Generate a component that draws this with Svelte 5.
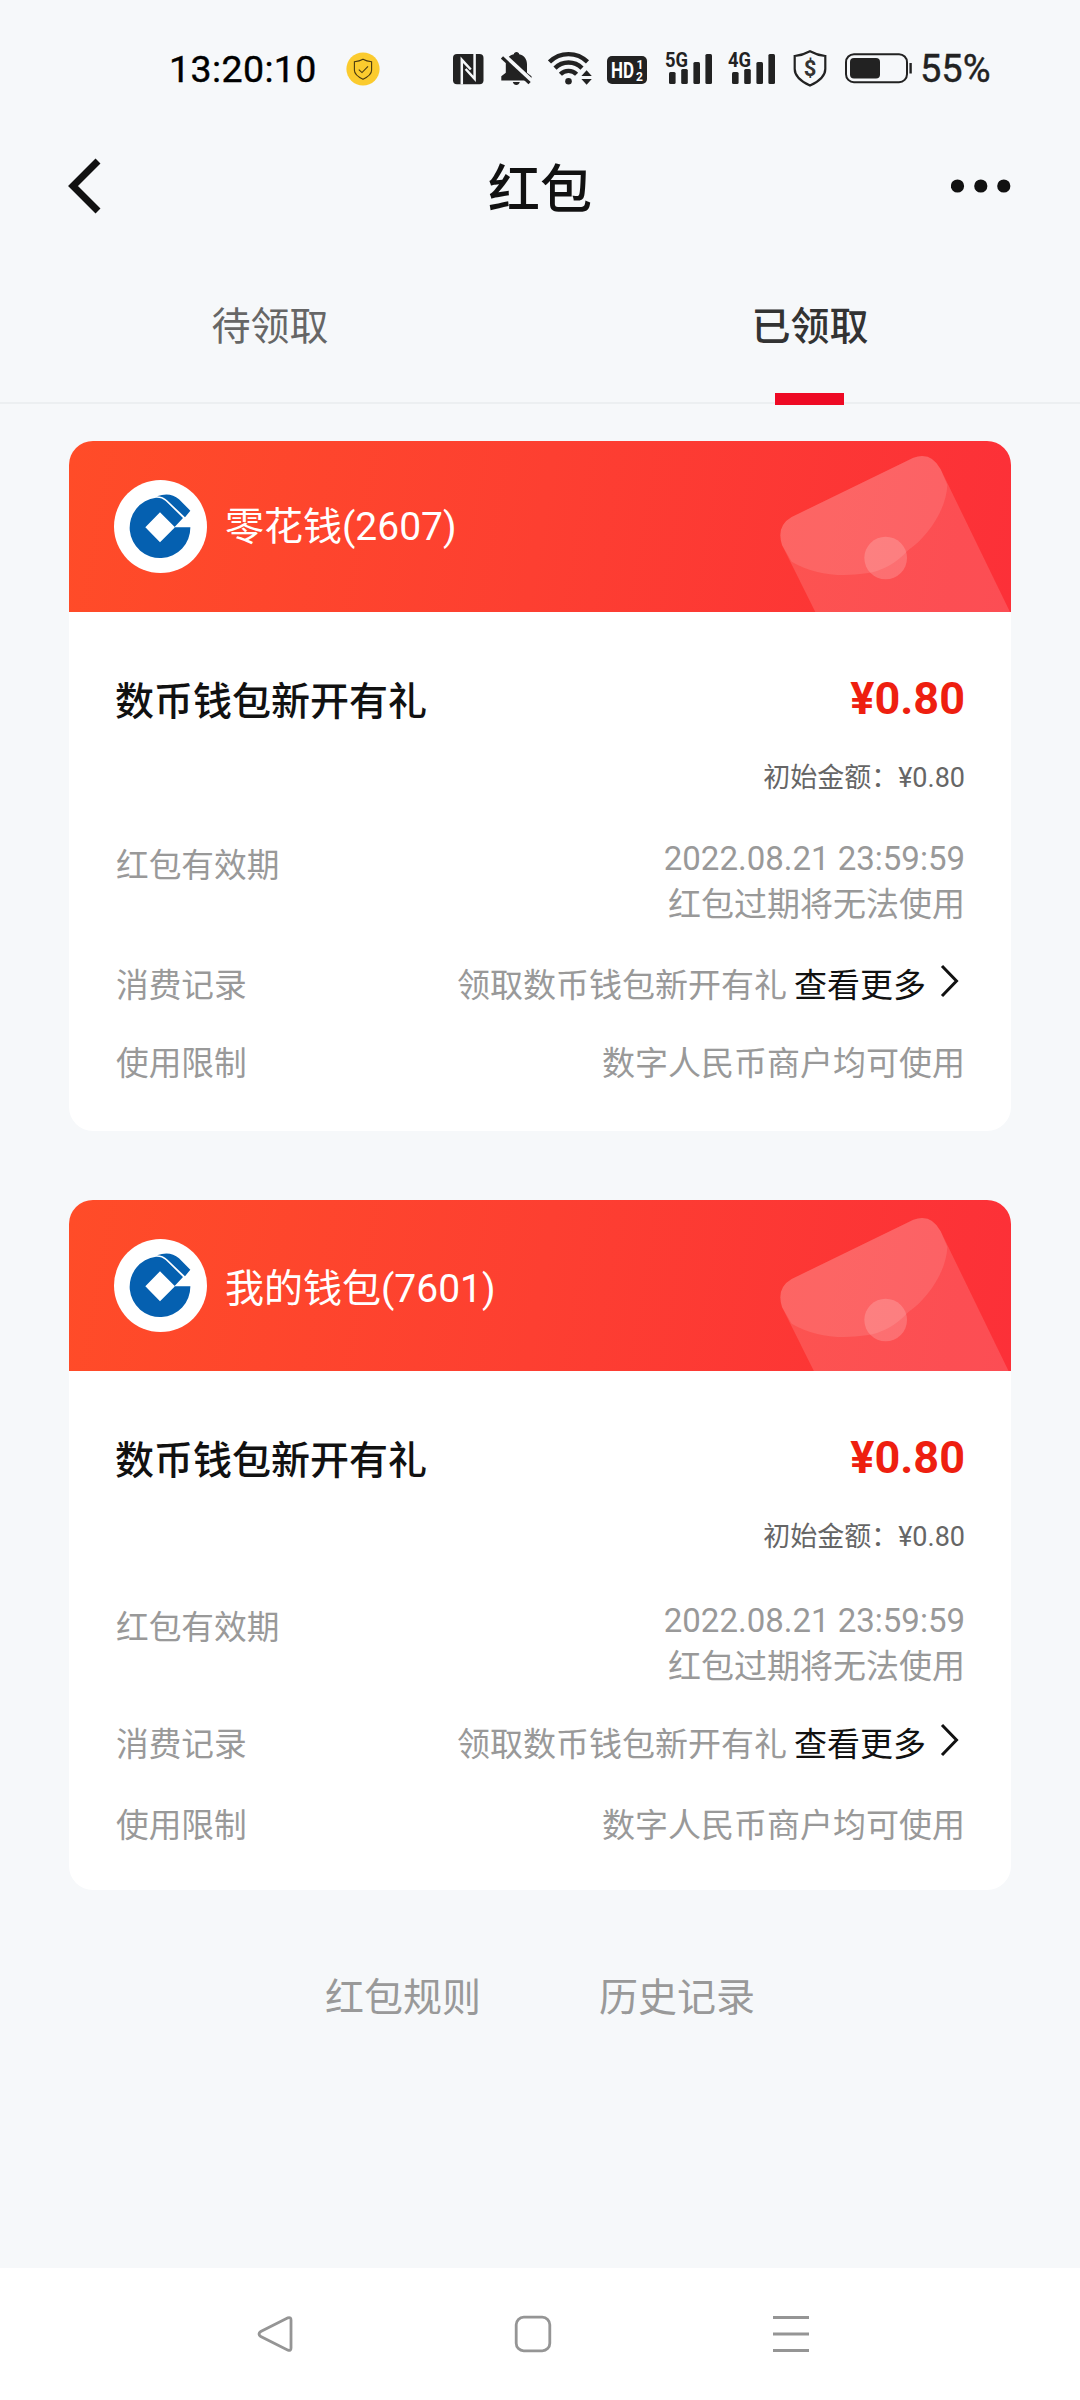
<script lang="ts">
  type Packet = {
    wallet: string;
    tail: string;
    title: string;
    amount: string;
    expires: string;
    record: string;
    limit: string;
  };

  const tabs = ["待领取", "已领取"];
  let active = $state(1);

  const packets: Packet[] = [
    {
      wallet: "零花钱",
      tail: "2607",
      title: "数币钱包新开有礼",
      amount: "¥0.80",
      expires: "2022.08.21 23:59:59",
      record: "领取数币钱包新开有礼",
      limit: "数字人民币商户均可使用",
    },
    {
      wallet: "我的钱包",
      tail: "7601",
      title: "数币钱包新开有礼",
      amount: "¥0.80",
      expires: "2022.08.21 23:59:59",
      record: "领取数币钱包新开有礼",
      limit: "数字人民币商户均可使用",
    },
  ];
</script>

{#snippet signal(label: string)}
  <svg class="signal" width="48" height="40" viewBox="0 0 48 40">
    <text x="0" y="18" textLength="23" lengthAdjust="spacingAndGlyphs">{label}</text>
    <rect x="4" y="23" width="6.6" height="12" rx="1.5" />
    <rect x="16.2" y="20" width="6.6" height="15" rx="1.5" />
    <rect x="28.4" y="13" width="6.6" height="22" rx="1.5" />
    <rect x="40.4" y="5" width="6.6" height="30" rx="1.5" />
  </svg>
{/snippet}

<div class="screen">
  <div class="status">
    <span class="time">13:20:10</span>
    <svg class="guard" width="34" height="34" viewBox="0 0 34 34">
      <circle cx="17" cy="17" r="16.6" fill="#fbcb2e" />
      <path
        d="M17 7.2c2.600 1.500 5.400 2.200 8.600 2.500v8.600c0 4-3.400 6.500-8.600 9-5.200-2.500-8.600-5-8.600-9V9.700c3.200-.3 6-1 8.600-2.500z"
        fill="none"
        stroke="#4a3a10"
        stroke-width="1.100"
      />
      <path d="M12.800 17.600l3.200 3 6-6.200" fill="none" stroke="#4a3a10" stroke-width="1.100" />
    </svg>

    <svg class="nfc" width="31" height="40" viewBox="0 0 31 40">
      <rect x="0" y="5" width="30.500" height="30.200" rx="4" fill="#222" />
      <path
        d="M8.800 35.500V10.800L17.800 20.500M21.600 4.500v25.300L12.600 20"
        fill="none"
        stroke="#f6f8fa"
        stroke-width="2.500"
      />
    </svg>

    <svg class="bell" width="31" height="40" viewBox="0 0 31 40">
      <path
        d="M15.500 3c1.500 0 2.500 1 2.700 2.200 5 1.200 7.800 5 7.800 10v8.500l4.500 3.600v4.300H.3v-4.300l4.500-3.600v-8.500c0-5 2.800-8.800 8-10 .2-1.200 1.200-2.200 2.700-2.200zM11.800 33h7c-.6 2-1.800 3-3.500 3s-2.900-1-3.500-3z"
        fill="#222"
      />
      <path d="M2 5.900l29 26.800" stroke="#f6f8fa" stroke-width="5.200" />
      <path d="M1 8.500l27.600 25.600" stroke="#222" stroke-width="3.200" />
    </svg>

    <svg class="wifi" width="44" height="40" viewBox="0 0 44 40">
      <g fill="none" stroke="#222" stroke-width="4.400">
        <path d="M1.500 12.900a27 27 0 0 1 38 0" />
        <path d="M7 19.100a19 19 0 0 1 27 0" />
        <path d="M12.400 25.200a11.500 11.500 0 0 1 16.200 0" />
      </g>
      <circle cx="20.500" cy="32.300" r="3.300" fill="#222" />
      <path d="M38.600 21.300l5.200 5.600h-10.400zM38.600 35.700l5.200-5.600h-10.400z" fill="#222" />
    </svg>

    <svg class="hd" width="40" height="40" viewBox="0 0 40 40">
      <rect x="0" y="7" width="40" height="28" rx="5" fill="#222" />
      <text class="hd-main" x="4" y="29" textLength="23" lengthAdjust="spacingAndGlyphs">HD</text>
      <text class="hd-sub" x="29.500" y="20">1</text>
      <text class="hd-sub" x="29" y="32">2</text>
    </svg>

    {@render signal("5G")}
    {@render signal("4G")}

    <svg class="shield" width="34" height="40" viewBox="0 0 34 40">
      <path
        d="M17 2.200c4.500 2.500 9.500 4.200 15.300 4.800V20c0 7.500-6 12.300-15.300 16.600C7.700 32.300 1.700 27.500 1.700 20V7C7.500 6.400 12.500 4.700 17 2.200z"
        fill="none"
        stroke="#222"
        stroke-width="2.200"
      />
      <text x="17" y="27" text-anchor="middle">$</text>
    </svg>

    <svg class="battery" width="67" height="40" viewBox="0 0 67 40">
      <rect x="1" y="5.200" width="61" height="28" rx="8" fill="none" stroke="#222" stroke-width="2" />
      <rect x="5" y="9" width="30" height="20.500" rx="4" fill="#222" />
      <path d="M65.600 14v10.500" stroke="#222" stroke-width="2.400" />
    </svg>
    <span class="percent">55%</span>
  </div>

  <header>
    <svg width="34" height="56" viewBox="0 0 34 56">
      <path d="M31 3L6 28l25 25" fill="none" stroke="#111" stroke-width="7" />
    </svg>
    <h1>红包</h1>
    <svg width="60" height="20" viewBox="0 0 60 20" fill="#111">
      <circle cx="6.500" cy="10" r="6.600" />
      <circle cx="29.800" cy="10" r="6.600" />
      <circle cx="52.800" cy="10" r="6.600" />
    </svg>
  </header>

  <nav class="tabs">
    {#each tabs as tab, i}
      <button class:active={i === active} onclick={() => (active = i)}>{tab}</button>
    {/each}
  </nav>

  <main>
    {#each packets as packet}
      <section class="card">
        <div class="top">
          <svg class="logo" width="93" height="93" viewBox="162 150 279 279">
            <circle cx="301.500" cy="289.500" r="139.500" fill="#fff" />
            <g fill="#0560b0">
              <path
                d="M391 292A91 91 0 1 1 288 203Q305 202 317 213L369 264L343 291.500H391ZM300 247L256 292L300 337L345 292Z"
                fill-rule="evenodd"
              />
              <path d="M291 199Q330 184 357 208L391 242L375 262L323 212Q309 199 291 199Z" />
            </g>
          </svg>
          <span class="wallet">{packet.wallet}({packet.tail})</span>
          <svg class="envelope" width="271" height="171" viewBox="0 33 813 513">
            <path
              d="M228 550L126 345Q108 288 155 261L520 83Q574 64 602 118L812 550Z"
              fill="#fff"
              fill-opacity=".14"
            />
            <path
              d="M155 261L520 83Q574 64 602 118L622 165C620 235 565 320 505 360Q450 420 380 430Q250 450 155 395L126 345Q108 288 155 261Z"
              fill="#fff"
              fill-opacity=".11"
            />
            <circle cx="437" cy="384" r="64" fill="#fff" fill-opacity=".18" />
          </svg>
        </div>

        <div class="body">
          <div class="line main">
            <h2>{packet.title}</h2>
            <strong>{packet.amount}</strong>
          </div>
          <p class="initial">初始金额：{packet.amount}</p>
          <div class="line valid">
            <span class="label">红包有效期</span>
            <span class="value">{packet.expires}<br />红包过期将无法使用</span>
          </div>
          <div class="line record">
            <span>消费记录</span>
            <span class="more">
              {packet.record}
              <b>查看更多</b>
              <svg width="20" height="34" viewBox="0 0 20 34">
                <path d="M2 2l14.500 15L2 32" fill="none" stroke="#111" stroke-width="3" />
              </svg>
            </span>
          </div>
          <div class="line limit">
            <span>使用限制</span>
            <span>{packet.limit}</span>
          </div>
        </div>
      </section>
    {/each}

    <div class="links">
      <span>红包规则</span>
      <span>历史记录</span>
    </div>
  </main>

  <footer>
    <svg width="36" height="38" viewBox="0 0 36 38">
      <path d="M31 2.800L3.800 16.500Q.2 19 3.800 21.500L31 35.200Q34 36 34 33V5Q34 2 31 2.800Z" />
    </svg>
    <svg width="38" height="38" viewBox="0 0 38 38">
      <rect x="2.200" y="2.200" width="33.600" height="33.600" rx="7.500" />
    </svg>
    <svg width="36" height="38" viewBox="0 0 36 38">
      <path d="M0 2.500h36M0 19h36M0 35.500h36" />
    </svg>
  </footer>
</div>

<style>
  :global(body) {
    margin: 0;
    background: #f6f8fa;
  }

  .screen {
    display: flex;
    flex-direction: column;
    width: 1080px;
    height: 2400px;
    overflow: hidden;
    background: #f6f8fa;
    color: #111;
    font-family: Roboto, "Noto Sans CJK SC", sans-serif;
  }

  svg {
    display: block;
    flex: none;
  }

  h1,
  h2,
  p {
    margin: 0;
  }

  .status {
    display: flex;
    align-items: center;
    height: 138px;
    padding-left: 169px;
  }

  .time {
    width: 177px;
    font-size: 37.500px;
    letter-spacing: 0.4px;
    color: #000;
    white-space: nowrap;
    -webkit-text-stroke: 0.4px #000;
  }

  .nfc {
    margin-left: 73px;
  }

  .bell {
    margin-left: 17px;
  }

  .wifi {
    margin-left: 16px;
  }

  .hd {
    margin-left: 15px;
  }

  .signal {
    margin-left: 18px;
    fill: #222;
    font: 700 21px Roboto, sans-serif;
  }

  .signal + .signal {
    margin-left: 15px;
  }

  .hd-main {
    fill: #fff;
    font: 700 22px Roboto, sans-serif;
  }

  .hd-sub {
    fill: #fff;
    font: 700 12px Roboto, sans-serif;
  }

  .shield {
    margin-left: 17px;
    font: 700 22px Roboto, sans-serif;
    fill: #333;
  }

  .battery {
    margin-left: 18px;
  }

  .percent {
    margin-left: 8px;
    font-size: 38px;
    color: #222;
    -webkit-text-stroke: 0.4px #222;
  }

  header {
    display: flex;
    align-items: center;
    justify-content: space-between;
    height: 96px;
    padding: 0 69px 0 67px;
  }

  h1 {
    padding: 9px 0 0 28px;
    font-size: 52px;
    font-weight: 500;
    line-height: 87px;
  }

  .tabs {
    display: flex;
    box-sizing: border-box;
    height: 170px;
    border-bottom: 2px solid #eceff1;
  }

  button {
    display: flex;
    flex: 1;
    flex-direction: column;
    align-items: center;
    justify-content: space-between;
    height: 171px;
    padding: 60px 0 0;
    border: 0;
    background: none;
    color: #666;
    font: 39px/58px "Noto Sans CJK SC", sans-serif;
  }

  button.active {
    color: #333;
    font-weight: 500;
  }

  button.active::after {
    content: "";
    width: 69px;
    height: 12px;
    margin-right: 1px;
    background: #ee0a24;
  }

  main {
    display: flex;
    flex: 1;
    flex-direction: column;
    gap: 69px;
    padding: 37px 69px 0;
  }

  .card {
    height: 690px;
    overflow: hidden;
    border-radius: 24px;
    background: #fff;
  }

  .top {
    display: flex;
    align-items: center;
    height: 171px;
    overflow: hidden;
    padding-left: 45px;
    background: linear-gradient(100deg, #ff4c28, #fd3f31 50%, #fc3038);
  }

  .wallet {
    flex: 1;
    padding: 1px 0 0 18px;
    color: #fff;
    font-size: 39px;
    line-height: 58px;
  }

  .body {
    padding: 60px 46px 0;
    color: #999;
    font-size: 33px;
    line-height: 46px;
  }

  .line {
    display: flex;
    justify-content: space-between;
  }

  .line > span:first-child {
    margin-left: 1px;
    font-size: 32.700px;
  }

  .main {
    height: 60px;
    color: #111;
    line-height: 60px;
  }

  h2 {
    font-size: 39px;
    font-weight: 500;
  }

  strong {
    margin-top: -3px;
    color: #ee1f10;
    font-size: 45px;
    font-weight: 700;
  }

  .initial {
    padding-top: 24px;
    color: #666;
    font-size: 27px;
    line-height: 44px;
    text-align: right;
  }

  .valid {
    height: 92px;
    padding-top: 36px;
  }

  .label {
    padding-top: 7px;
  }

  .value {
    text-align: right;
  }

  .record {
    padding-top: 35px;
  }

  .more {
    display: flex;
    gap: 7px;
  }

  .more b {
    color: #111;
    font-weight: 400;
  }

  .more svg {
    margin: 1px 5px 0 7px;
  }

  .limit {
    padding-top: 32px;
  }

  .card + .card .wallet,
  .card + .card .envelope {
    margin-top: 6px;
  }

  .card + .card .valid {
    padding-top: 39px;
  }

  .card + .card .record {
    padding-top: 32px;
  }

  .card + .card .limit {
    padding-top: 35px;
  }

  .links {
    display: flex;
    justify-content: center;
    gap: 118px;
    margin-top: 10px;
    color: #999;
    font-size: 39px;
    line-height: 58px;
  }

  footer {
    display: flex;
    justify-content: space-between;
    height: 85px;
    padding: 47px 271px 0 257px;
    background: #fff;
  }

  footer svg {
    fill: none;
    stroke: #959595;
    stroke-width: 2.800;
  }
</style>
